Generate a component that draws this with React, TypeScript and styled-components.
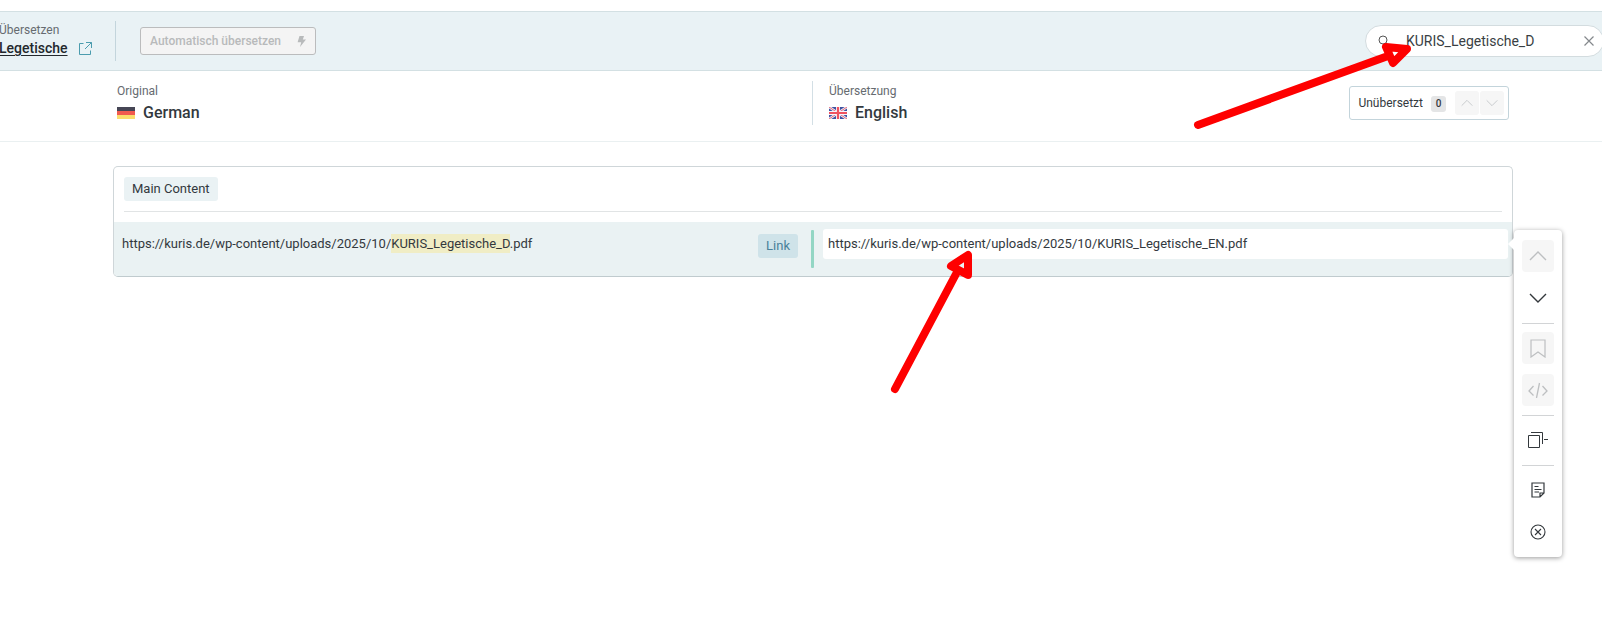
import React from "react";
import styled, { createGlobalStyle, css } from "styled-components";

const GlobalStyle = createGlobalStyle`
  *, *::before, *::after { box-sizing: border-box; }
  body {
    margin: 0;
    background: #fff;
    color: #33393e;
    font-family: Roboto, "Liberation Sans", sans-serif;
    font-size: 13px;
    line-height: 20px;
  }
  button, input { font: inherit; color: inherit; }
  button { padding: 0; border: 0; background: none; }
  svg { display: block; flex: none; }
`;

const Page = styled.div`
  position: relative;
  min-height: 100vh;
  padding-top: 11px;
  overflow: hidden;
`;

const TopBar = styled.header`
  display: flex;
  align-items: center;
  height: 60px;
  background: #e9f2f5;
  border-top: 1px solid #d3e0e3;
  border-bottom: 1px solid #d3e0e3;
`;

const JobInfo = styled.div`
  display: flex;
  flex-direction: column;
  width: 116px;
  margin-left: -1px;
  padding-bottom: 4px;
`;

const Caption = styled.span`
  display: block;
  font-size: 12px;
  line-height: 18px;
  color: #666b70;
`;

const JobTitle = styled.div`
  display: flex;
  align-items: center;
  gap: 11px;
  line-height: 18px;
`;

const JobLink = styled.a`
  font-size: 14px;
  font-weight: 500;
  color: #23282d;
  text-decoration: underline;
  text-underline-offset: 2px;
`;

const IconLink = styled.a`
  color: #4b9cae;
`;

const Divider = styled.span`
  width: 1px;
  height: 40px;
  background: #c3d5dc;
`;

const AutoButton = styled.button`
  display: flex;
  align-items: center;
  gap: 16px;
  height: 28px;
  margin-left: 24px;
  padding: 0 9px;
  border: 1px solid #bbbcbd;
  border-radius: 3px;
  background: #f4f4f4;
  color: #b8babb;
  font-size: 12px;
  font-weight: 500;
`;

const Search = styled.label`
  display: flex;
  align-items: center;
  width: 239px;
  height: 32px;
  margin: 0 -2px 0 auto;
  padding: 0 9px 0 12px;
  border: 1px solid #d3dcdf;
  border-radius: 16px;
  background: #fff;
  color: #555;
`;

const SearchInput = styled.input`
  flex: 1;
  min-width: 0;
  margin-left: 17px;
  padding: 0;
  border: 0;
  outline: 0;
  background: none;
  font-size: 14px;
  color: #3a3f44;
`;

const ClearButton = styled.button`
  color: #84888c;
`;

const LanguageBar = styled.section`
  display: grid;
  grid-template-columns: 1fr 1fr;
  height: 71px;
  padding: 10px 89px 0 113px;
  border-bottom: 1px solid #eaf0f1;
`;

const LanguageCell = styled.div<{ $target?: boolean }>`
  display: flex;
  justify-content: space-between;
  height: 44px;
  padding: 1px 0 0 4px;
  ${(p) =>
    p.$target &&
    css`
      padding: 1px 4px 0 16px;
      border-left: 1px solid #d3dfe5;
      margin-left: -1px;
    `}
`;

const LanguageName = styled.div`
  display: flex;
  align-items: center;
  gap: 8px;
  margin-top: 2px;
  font-size: 16px;
  font-weight: 500;
  line-height: 22px;
`;

const Filter = styled.div`
  display: flex;
  align-items: center;
  height: 34px;
  margin-top: 4px;
  padding: 0 4px 0 8px;
  border: 1px solid #c3d4db;
  border-radius: 3px;
  font-size: 12px;
`;

const Count = styled.span`
  width: 15px;
  height: 16px;
  margin: 1px 9px 0 8px;
  border-radius: 3px;
  background: #e4e5e6;
  font-size: 10px;
  font-weight: 500;
  line-height: 16px;
  text-align: center;
`;

const StepButton = styled.button`
  display: grid;
  place-items: center;
  width: 24px;
  height: 24px;
  border-radius: 3px;
  background: #f6f6f6;
  color: #c5c8ca;
  & + & { margin-left: 1px; }
`;

const Card = styled.main`
  margin: 24px 89px 0 113px;
  border: 1px solid #cfd6d9;
  border-bottom-color: #c0cbce;
  border-radius: 5px;
`;

const CardHead = styled.div`
  margin: 0 10px;
  padding: 10px 0;
  border-bottom: 1px solid #e1e4e5;
`;

const Tag = styled.span<{ $link?: boolean }>`
  display: inline-block;
  flex: none;
  height: 24px;
  padding: 0 8px;
  border-radius: 3px;
  background: ${(p) => (p.$link ? "#cfe3e9" : "#eaf2f4")};
  color: ${(p) => (p.$link ? "#4a8199" : "inherit")};
  line-height: 24px;
  vertical-align: top;
`;

const Row = styled.div`
  position: relative;
  display: grid;
  grid-template-columns: 1fr 1fr;
  height: 54px;
  margin-top: 10px;
  border-radius: 0 0 4px 4px;
  background: #eaf2f3;
`;

const Source = styled.div`
  display: flex;
  align-items: flex-start;
  justify-content: space-between;
  padding: 12px 15px 0 8px;
`;

const Mark = styled.mark`
  padding: 2px 0;
  background: #f0edc5;
  color: inherit;
`;

const Target = styled.div`
  display: flex;
  align-items: flex-start;
  margin-left: -2px;
  padding: 7px 4px 0 0;
`;

const Status = styled.span`
  width: 3px;
  height: 38px;
  margin: 1px 9px 0 0;
  border-radius: 1px;
  background: #93d6c4;
`;

const TargetInput = styled.input`
  flex: 1;
  min-width: 0;
  height: 30px;
  padding: 0 5px 2px;
  border: 0;
  border-radius: 3px;
  outline: 0;
  background: #fff;
`;

const ToolPanel = styled.aside`
  position: absolute;
  top: 8px;
  left: 100%;
  display: flex;
  flex-direction: column;
  align-items: center;
  width: 48px;
  margin-left: 2px;
  padding: 10px 0 9px;
  border-radius: 4px;
  background: #fff;
  box-shadow: 0 1px 5px rgba(0, 0, 0, 0.4);
  &::before {
    content: "";
    position: absolute;
    top: 8px;
    left: -6px;
    border: solid transparent;
    border-width: 6px 6px 6px 0;
    border-right-color: #fff;
  }
`;

const ToolButton = styled.button`
  display: grid;
  place-items: center;
  width: 32px;
  height: 32px;
  border-radius: 4px;
  color: #33383c;
  & + & { margin-top: 10px; }
  &:disabled { background: #f6f6f6; color: #bdbfc1; }
`;

const ToolRule = styled.hr`
  width: 32px;
  height: 1px;
  margin: 9px 0 8px;
  border: 0;
  background: #d2d4d6;
`;

const Annotations = styled.svg`
  position: absolute;
  inset: 0 0 auto auto;
  pointer-events: none;
`;

type ChevronProps = { up?: boolean; size?: number };
const Chevron = ({ up, size = 18 }: ChevronProps) => (
  <svg width={size} height={size} viewBox="0 0 18 18" fill="none" stroke="currentColor" strokeWidth="1.4">
    <path d={up ? "M1 13 9 5l8 8" : "M1 5l8 8 8-8"} />
  </svg>
);

const GermanFlag = () => (
  <svg width="18" height="12" viewBox="0 0 18 12">
    <path fill="#464655" d="M0 0h18v4H0z" />
    <path fill="#f15a4f" d="M0 4h18v4H0z" />
    <path fill="#fbdd6c" d="M0 8h18v4H0z" />
  </svg>
);

const BritishFlag = () => (
  <svg width="18" height="12" viewBox="0 0 18 12">
    <path fill="#3e52a0" d="M0 0h18v12H0z" />
    <path stroke="#eef0f8" strokeWidth="2.6" d="M0 0l18 12M18 0 0 12" />
    <path stroke="#e8576b" strokeWidth="0.9" d="M0 0l18 12M18 0 0 12" />
    <path stroke="#f5f5fa" strokeWidth="4" d="M9 0v12M0 6h18" />
    <path stroke="#f0525f" strokeWidth="2.2" d="M9 0v12M0 6h18" />
  </svg>
);

export default function App() {
  return (
    <>
      <GlobalStyle />
      <Page>
        <TopBar>
          <JobInfo>
            <Caption>Übersetzen</Caption>
            <JobTitle>
              <JobLink href="#job">Legetische</JobLink>
              <IconLink href="#open" aria-label="Legetische öffnen">
                <svg width="13" height="13" viewBox="0 0 13 13" fill="none" stroke="currentColor">
                  <path d="M4.5 1.5h-4v11h11v-4M7 .5h5.500V6M12.500.5 6 7" />
                </svg>
              </IconLink>
            </JobTitle>
          </JobInfo>
          <Divider />
          <AutoButton type="button" disabled>
            Automatisch übersetzen
            <svg width="9" height="11" viewBox="0 0 9 11" fill="currentColor">
              <path d="M2.500 0h4.500L5.800 3.500H9L3 11l1.200-4.800H.6z" />
            </svg>
          </AutoButton>
          <Search>
            <svg width="11" height="13" viewBox="0 0 11 13" fill="none" stroke="currentColor">
              <circle cx="5" cy="5" r="4" />
              <path d="m8 8 3 4" />
            </svg>
            <SearchInput type="text" aria-label="Suche" defaultValue="KURIS_Legetische_D" />
            <ClearButton type="button" aria-label="Suche leeren">
              <svg width="10" height="10" viewBox="0 0 10 10" fill="none" stroke="currentColor" strokeWidth="1.200">
                <path d="m.5.5 9 9M9.500.5l-9 9" />
              </svg>
            </ClearButton>
          </Search>
        </TopBar>

        <LanguageBar>
          <LanguageCell>
            <div>
              <Caption>Original</Caption>
              <LanguageName><GermanFlag />German</LanguageName>
            </div>
          </LanguageCell>
          <LanguageCell $target>
            <div>
              <Caption>Übersetzung</Caption>
              <LanguageName><BritishFlag />English</LanguageName>
            </div>
            <Filter>
              Unübersetzt
              <Count>0</Count>
              <StepButton type="button" disabled aria-label="Vorheriges"><Chevron up size={12} /></StepButton>
              <StepButton type="button" disabled aria-label="Nächstes"><Chevron size={12} /></StepButton>
            </Filter>
          </LanguageCell>
        </LanguageBar>

        <Card>
          <CardHead><Tag>Main Content</Tag></CardHead>
          <Row>
            <Source>
              <span>
                https://kuris.de/wp-content/uploads/2025/10/<Mark>KURIS_Legetische_D</Mark>.pdf
              </span>
              <Tag $link>Link</Tag>
            </Source>
            <Target>
              <Status />
              <TargetInput
                type="text"
                aria-label="Übersetzung"
                defaultValue="https://kuris.de/wp-content/uploads/2025/10/KURIS_Legetische_EN.pdf"
              />
            </Target>
            <ToolPanel>
              <ToolButton type="button" disabled aria-label="Nach oben"><Chevron up /></ToolButton>
              <ToolButton type="button" aria-label="Nach unten"><Chevron /></ToolButton>
              <ToolRule />
              <ToolButton type="button" disabled aria-label="Lesezeichen">
                <svg width="16" height="20" viewBox="0 0 16 20" fill="none" stroke="currentColor" strokeWidth="1.200">
                  <path d="M1 2h14v17l-7-5-7 5z" />
                </svg>
              </ToolButton>
              <ToolButton type="button" disabled aria-label="HTML">
                <svg width="20" height="16" viewBox="0 0 20 16" fill="none" stroke="currentColor" strokeWidth="1.300">
                  <path d="M5.500 4 1 9l4.500 4.500M14.500 4 19 9l-4.500 4.500M11.500 1l-3 15" />
                </svg>
              </ToolButton>
              <ToolRule />
              <ToolButton type="button" aria-label="Original kopieren">
                <svg width="20" height="16" viewBox="0 0 20 16" fill="none" stroke="currentColor">
                  <path d="M.5 3.500h11v12H.5zM3 .5h11.500V12M16 7.500h4" />
                </svg>
              </ToolButton>
              <ToolRule />
              <ToolButton type="button" aria-label="Notiz">
                <svg width="14" height="16" viewBox="0 0 14 16" fill="none" stroke="currentColor" strokeWidth="1.200">
                  <path d="M1 1h12v10l-4 4H1zM13 11H9v4M3.500 4.500h4M3.500 7.500h7M3.500 10h4.500" />
                </svg>
              </ToolButton>
              <ToolButton type="button" aria-label="Leeren">
                <svg width="16" height="16" viewBox="0 0 16 16" fill="none" stroke="currentColor" strokeWidth="1.100">
                  <circle cx="8" cy="8" r="7" />
                  <path d="m5 5 6 6M11 5l-6 6" />
                </svg>
              </ToolButton>
            </ToolPanel>
          </Row>
        </Card>

        <Annotations
          width="720"
          height="400"
          viewBox="882 0 720 400"
          fill="none"
          stroke="#fe0000"
          strokeWidth="8"
          strokeLinecap="round"
          strokeLinejoin="round"
          aria-hidden="true"
        >
          <path d="M1198 125 1388 56M1386 47l21 2-14 14z" />
          <path d="M895 389 956 274M951 266l17-11v20z" />
        </Annotations>
      </Page>
    </>
  );
}
